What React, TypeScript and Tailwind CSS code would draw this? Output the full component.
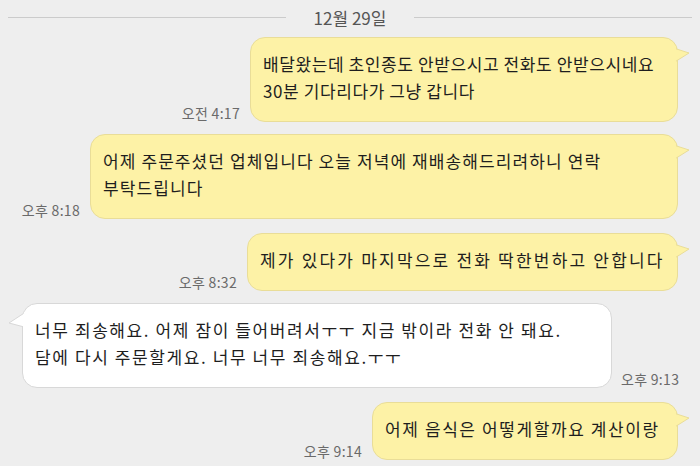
import React from "react";

type Msg = {
  id: number;
  mine: boolean;
  lines: string[];
  time: string;
  width: string;
  gap: string;
  track: string;
};

const messages: Msg[] = [
  {
    id: 1,
    mine: true,
    lines: [
      "배달왔는데 초인종도 안받으시고 전화도 안받으시네요",
      "30분 기다리다가 그냥 갑니다",
    ],
    time: "오전 4:17",
    width: "w-[428px]",
    gap: "mt-[3px]",
    track: "tracking-[0.6px]",
  },
  {
    id: 2,
    mine: true,
    lines: [
      "어제 주문주셨던 업체입니다 오늘 저녁에 재배송해드리려하니 연락",
      "부탁드립니다",
    ],
    time: "오후 8:18",
    width: "w-[588px]",
    gap: "mt-[12px]",
    track: "tracking-[1.1px]",
  },
  {
    id: 3,
    mine: true,
    lines: ["제가 있다가 마지막으로 전화 딱한번하고 안합니다"],
    time: "오후 8:32",
    width: "w-[431px]",
    gap: "mt-[14px]",
    track: "tracking-[2.2px]",
  },
  {
    id: 4,
    mine: false,
    lines: [
      "너무 죄송해요. 어제 잠이 들어버려서ㅜㅜ 지금 밖이라 전화 안 돼요.",
      "담에 다시 주문할게요. 너무 너무 죄송해요.ㅜㅜ",
    ],
    time: "오후 9:13",
    width: "w-[590px]",
    gap: "mt-[12px]",
    track: "tracking-[1.6px]",
  },
  {
    id: 5,
    mine: true,
    lines: ["어제 음식은 어떻게할까요 계산이랑"],
    time: "오후 9:14",
    width: "w-[306px]",
    gap: "mt-[14px]",
    track: "tracking-[1.6px]",
  },
];

function Tail({ mine }: { mine: boolean }) {
  if (mine) {
    return (
      <svg
        className="absolute -right-[13px] top-[10px]"
        width="15"
        height="15"
        viewBox="0 0 15 15"
      >
        <path d="M0 0.5 L14 5 L0 13.5 Z" fill="#fdf2a6" />
        <path
          d="M1 0.8 L14 5 L1 13.2"
          fill="none"
          stroke="#e9dd98"
          strokeWidth="1"
        />
      </svg>
    );
  }
  return (
    <svg
      className="absolute -left-[15px] top-[9px]"
      width="16"
      height="16"
      viewBox="0 0 16 16"
    >
      <path d="M16 0.5 L1 10 L16 14 Z" fill="#ffffff" />
      <path
        d="M15 0.8 L1 10 L15 13.7"
        fill="none"
        stroke="#d8d8d8"
        strokeWidth="1"
      />
    </svg>
  );
}

function Time({ text }: { text: string }) {
  return (
    <span className="whitespace-nowrap text-[14px] leading-[16px] text-[#6a6a6a] mb-[1px] tracking-[0.3px]">
      {text}
    </span>
  );
}

function Bubble({ msg }: { msg: Msg }) {
  const color = msg.mine
    ? "bg-[#fdf2a6] border-[#e9dd98]"
    : "bg-white border-[#d8d8d8]";
  return (
    <div
      className={`relative ${msg.width} rounded-[15px] border ${color} pl-[12px] pt-[12px] pb-[17px] text-[17px] leading-[27px] text-[#1e1e1e] whitespace-nowrap ${msg.track}`}
    >
      {msg.lines.map((line, i) => (
        <div key={i}>{line}</div>
      ))}
      <Tail mine={msg.mine} />
    </div>
  );
}

export default function App() {
  return (
    <div
      className="w-[700px] h-[466px] overflow-hidden bg-[#eeeeee] flex flex-col"
      style={{ fontFamily: '"Noto Sans CJK KR", "Noto Sans", sans-serif' }}
    >
      {/* 날짜 구분선 */}
      <div className="h-[34px] flex items-center px-[8px] gap-[28px]">
        <div className="flex-1 h-px bg-[#cbcbcb]" />
        <span className="text-[17px] text-[#555555] leading-none">12월 29일</span>
        <div className="flex-1 h-px bg-[#cbcbcb]" />
      </div>

      {messages.map((msg) =>
        msg.mine ? (
          <div
            key={msg.id}
            className={`flex justify-end items-end gap-[10px] pr-[22px] ${msg.gap}`}
          >
            <Time text={msg.time} />
            <Bubble msg={msg} />
          </div>
        ) : (
          <div
            key={msg.id}
            className={`flex justify-start items-end gap-[9px] pl-[22px] ${msg.gap}`}
          >
            <Bubble msg={msg} />
            <Time text={msg.time} />
          </div>
        )
      )}
    </div>
  );
}
